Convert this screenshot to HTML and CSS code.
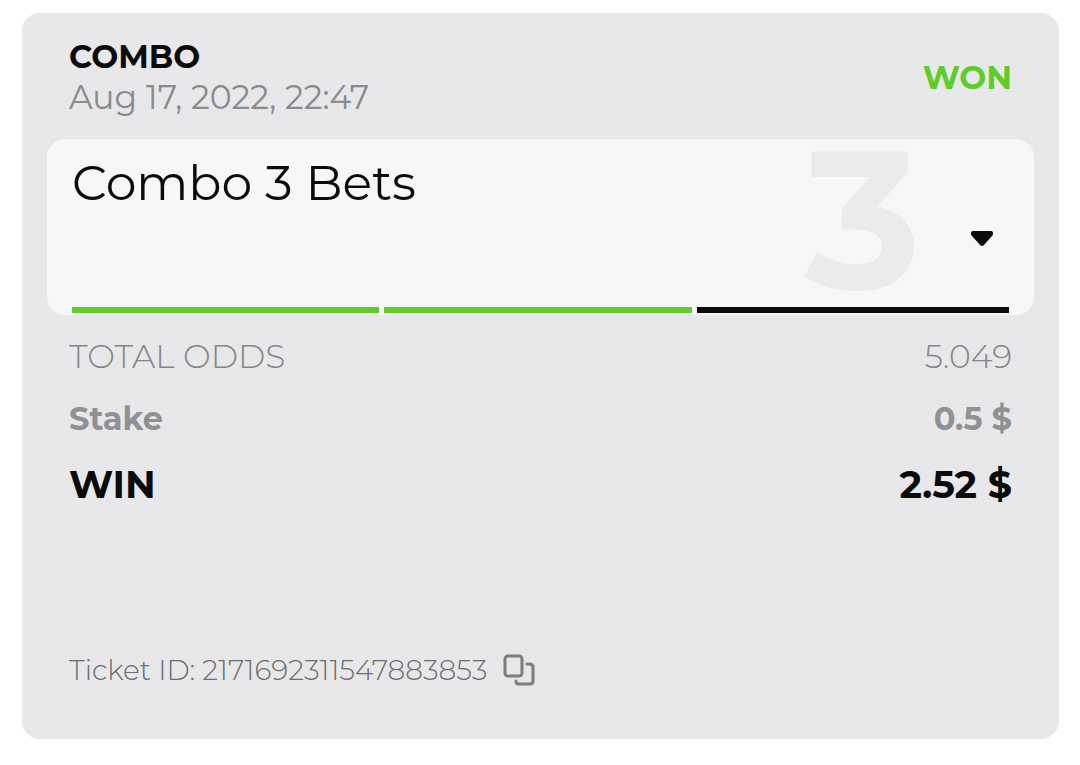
FILE: index.html
```html
<!DOCTYPE html>
<html lang="en">
  <head>
    <meta charset="UTF-8">
    <meta name="viewport" content="width=device-width, initial-scale=1">
    <title>Bet ticket</title>
    <link rel="stylesheet" href="styles.css">
  </head>
  <body>
    <main class="ticket">
      <header class="ticket-header">
        <div>
          <h1 class="ticket-type">COMBO</h1>
          <time class="ticket-date" datetime="2022-08-17T22:47">Aug 17, 2022, 22:47</time>
        </div>
        <strong class="ticket-status">WON</strong>
      </header>

      <section class="combo">
        <div class="combo-body">
          <h2 class="combo-title">Combo 3 Bets</h2>
          <span class="combo-count" aria-hidden="true">3</span>
          <button class="icon-button combo-toggle" type="button" aria-label="Show bets">
            <svg width="24" height="18" viewBox="0 0 24 18">
              <path d="M3 1H21Q23 1 23 3V4Q23 5 22 6L14 15Q12 17 10 15L2 6Q1 5 1 4V3Q1 1 3 1Z" fill="#0b0b0b"/>
            </svg>
          </button>
        </div>
        <div class="combo-bars">
          <span class="bar bar-won"></span>
          <span class="bar bar-won"></span>
          <span class="bar"></span>
        </div>
      </section>

      <dl class="totals">
        <div class="total total-odds">
          <dt>TOTAL ODDS</dt>
          <dd>5.049</dd>
        </div>
        <div class="total total-stake">
          <dt>Stake</dt>
          <dd>0.5 $</dd>
        </div>
        <div class="total total-win">
          <dt>WIN</dt>
          <dd>2.52 $</dd>
        </div>
      </dl>

      <footer class="ticket-footer">
        <span>Ticket ID: 2171692311547883853</span>
        <button class="icon-button" type="button" aria-label="Copy ticket ID">
          <svg width="32" height="32" viewBox="0 0 32 32" fill="none" stroke="#7c7d7e" stroke-width="3" stroke-linecap="round">
            <rect x="2" y="2" width="17" height="20" rx="3"/>
            <path d="M24 10H26Q30 10 30 13V27Q30 30 27 30H16Q13 30 13 27"/>
          </svg>
        </button>
      </footer>
    </main>
  </body>
</html>
```

FILE: styles.css
```css
* {
  box-sizing: border-box;
}
body {
  margin: 0;
  padding: 13px 21px 26px 22px;
  background: #fff;
  color: #0b0b0b;
  font-family: Montserrat, Inter, sans-serif;
  font-size: 32px;
  line-height: 40px;
}
h1,
h2,
dl,
dd {
  margin: 0;
}
.ticket {
  padding: 24px 25px 48px;
  border-radius: 18px;
  background: #e8e8ea;
}
.ticket-header {
  display: flex;
  align-items: center;
  justify-content: space-between;
  padding: 0 22px;
}
.ticket-type {
  font-size: 32px;
  font-weight: 700;
}
.ticket-date {
  display: block;
  color: #8a8b8c;
  font-size: 33px;
  font-weight: 400;
}
.ticket-status {
  padding-top: 2px;
  color: #5fcc28;
  font-weight: 700;
}

.combo {
  margin-top: 22px;
  padding: 0 25px 2px;
  border-radius: 18px;
  background: #f7f7f9;
}
.combo-body {
  display: flex;
  align-items: center;
  height: 168px;
}
.combo-title {
  flex: 1;
  align-self: flex-start;
  padding-top: 14px;
  font-size: 49px;
  line-height: 60px;
  font-weight: 400;
}
.combo-count {
  align-self: flex-start;
  margin-right: 49px;
  color: #ebebed;
  font-size: 196px;
  line-height: 160px;
  font-weight: 700;
}
.icon-button {
  display: flex;
  padding: 0;
  border: 0;
  background: none;
  cursor: pointer;
}
.combo-toggle {
  margin: 31px 15px 0 0;
}
.combo-bars {
  display: grid;
  grid-template-columns: repeat(3, 1fr);
}
.bar {
  height: 6px;
  background: #0b0b0b;
}
.bar-won {
  margin-right: 5px;
  background: #5fcc28;
}

.totals {
  padding: 21px 22px 0;
}
.total {
  display: flex;
  justify-content: space-between;
}
.total-odds {
  color: #858687;
  font-size: 33px;
  font-weight: 300;
}
.total-stake {
  margin-top: 23px;
  color: #909192;
  font-weight: 700;
}
.total-win {
  margin-top: 26px;
  font-size: 38px;
  font-weight: 700;
}

.ticket-footer {
  display: flex;
  align-items: center;
  gap: 16px;
  margin-top: 145px;
  padding: 0 22px 1px;
  color: #6c6d6e;
  font-size: 28px;
  font-weight: 300;
}
```
